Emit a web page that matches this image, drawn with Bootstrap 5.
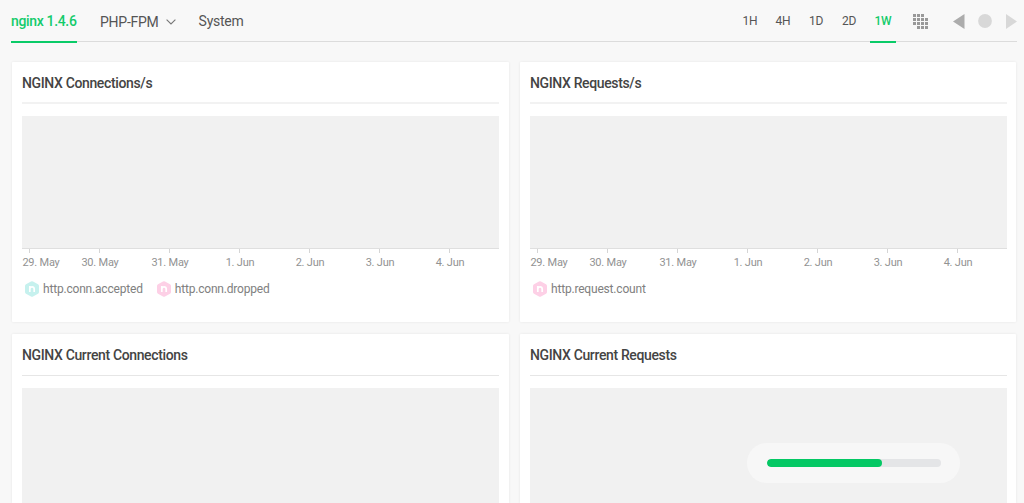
<!DOCTYPE html>
<html lang="en">
<head>
<meta charset="utf-8">
<meta name="viewport" content="width=device-width, initial-scale=1">
<title>NGINX monitoring</title>
<link href="https://cdn.jsdelivr.net/npm/bootstrap@5.3.0/dist/css/bootstrap.min.css" rel="stylesheet">
<style>
body{font-family:Roboto,sans-serif;background:#f8f8f8;color:#444;height:503px;overflow:hidden}
.topbar{height:42px;margin:0 7px 0 11px;border-bottom:1px solid #dcdcdc}
.topbar .nav-link{padding:0;height:43px;line-height:42px;font-size:14px;color:#555;white-space:nowrap;letter-spacing:-.25px}
.topbar .nav-link.active{color:#14cb6b;font-weight:500;border-bottom:2px solid #0acb68}
.main-tabs{gap:23px}
.main-tabs .nav-link.active{width:66px;letter-spacing:-.34px}
.topbar .ranges{gap:7px}
.topbar .ranges .nav-link{font-size:12px;width:26px;text-align:center;padding-right:2px}
.topbar .ranges .nav-link.active{padding-right:0}
.tools{height:42px;padding-left:17px}
.panels{display:grid;grid-template-columns:497px 496px;grid-template-rows:260px 170px;column-gap:11px;row-gap:12px;padding:20px 0 0 12px;height:461px;overflow:hidden}
.panel{border:0;border-radius:1px;padding:0 9px 0 10px;box-shadow:0 0 3px rgba(0,0,0,.08);background:#fff}
.panel h2{font-size:14px;font-weight:500;line-height:20px;color:#444;letter-spacing:-.36px;margin:0;width:477px;height:42px;padding-top:11px;border-bottom:2px solid #f2f2f2}
.panel.cut h2{border-bottom:1px solid #e6e6e6}
.plot{height:133px;width:477px;flex:none;margin-top:12px;background:#f1f1f1;border-bottom:1px solid #dfdfdf}
.panel.cut .plot{height:116px;border:0}
.axis{margin-left:-27px;width:490px}
.axis span{width:70px;flex:none;text-align:center;font-size:11px;line-height:16px;letter-spacing:-.22px;color:#929292;white-space:nowrap}
.axis span::before{content:"";display:block;width:1px;height:4px;margin:0 0 2px 34px;background:#d5d5d5}
.axis b{display:block;font-weight:400}
.axis span:first-child b{padding-left:22px}
.legend{padding:9px 0 0 3px;gap:14px;font-size:12px;line-height:18px;letter-spacing:-.19px;color:#808080}
.legend svg{margin-right:4px;margin-top:-1px}
.loader{position:absolute;left:747px;top:443px;width:213px;height:40px;border-radius:20px;background:#f7f7f7;padding:16px 19px 16px 20px}
.loader .progress{height:8px;border-radius:4px;background:#e4e5e7}
.loader .progress-bar{background:#04c864;border-radius:4px}
</style>
<script src="https://cdn.jsdelivr.net/npm/bootstrap@5.3.0/dist/js/bootstrap.bundle.min.js"></script>
</head>
<body>
<svg width="0" height="0" class="position-absolute">
  <symbol id="hex" viewBox="0 0 14 16">
    <path d="M6 .5Q7 0 8 .5l5 2.800q1 .500 1 1.600v6.200q0 1.100-1 1.600l-5 2.800q-1 .500-2 0l-5-2.800q-1-.500-1-1.600V4.900q0-1.100 1-1.600z" fill="currentColor"/>
    <path d="M4.800 11V5M4.800 7.600Q5.400 5.900 7 5.900 9.200 5.900 9.200 8.100V11" fill="none" stroke="#fff" stroke-width="1.700"/>
  </symbol>
</svg>
<header class="topbar d-flex justify-content-between">
  <nav class="nav main-tabs flex-nowrap">
    <a class="nav-link active" href="#">nginx 1.4.6</a>
    <a class="nav-link d-flex align-items-center" href="#">PHP-FPM<svg width="10" height="6" viewBox="0 0 10 6" style="margin-left:7px"><path d="M.6.6 5 5 9.400.6" fill="none" stroke="#777" stroke-width="1.100"/></svg></a>
    <a class="nav-link" href="#">System</a>
  </nav>
  <div class="d-flex">
    <nav class="nav ranges flex-nowrap">
      <a class="nav-link" href="#">1H</a>
      <a class="nav-link" href="#">4H</a>
      <a class="nav-link" href="#">1D</a>
      <a class="nav-link" href="#">2D</a>
      <a class="nav-link active" href="#">1W</a>
    </nav>
    <div class="tools d-flex align-items-center">
      <svg width="15" height="15" viewBox="0 0 15 15" fill="#999"><path d="M0 0h3v3H0zM4 0h3v3H4zM8 0h3v3H8zM0 4h3v3H0zM4 4h3v3H4zM8 4h3v3H8zM12 4h3v3h-3zM0 8h3v3H0zM4 8h3v3H4zM8 8h3v3H8zM12 8h3v3h-3zM4 12h3v3H4zM8 12h3v3H8zM12 12h3v3h-3z"/></svg>
      <svg width="12" height="15" viewBox="0 0 12 15" style="margin-left:25px"><path d="M0 7.500 11.500 0V15z" fill="#acacac"/></svg>
      <svg width="14" height="14" viewBox="0 0 14 14" style="margin-left:13px"><circle cx="7" cy="7" r="6.900" fill="#d8d8d8"/></svg>
      <svg width="11" height="15" viewBox="0 0 11 15" style="margin-left:14px"><path d="M0 0 11 7.500 0 15z" fill="#d8d8d8"/></svg>
    </div>
  </div>
</header>
<main class="panels">
  <section class="card panel">
    <h2>NGINX Connections/s</h2>
    <div class="plot"></div>
    <div class="axis d-flex"><span><b>29. May</b></span><span><b>30. May</b></span><span><b>31. May</b></span><span><b>1. Jun</b></span><span><b>2. Jun</b></span><span><b>3. Jun</b></span><span><b>4. Jun</b></span></div>
    <div class="legend d-flex">
      <div class="d-flex align-items-center"><svg width="14" height="16" color="#c6f1ee"><use href="#hex"/></svg>http.conn.accepted</div>
      <div class="d-flex align-items-center"><svg width="14" height="16" color="#fdd0e6"><use href="#hex"/></svg>http.conn.dropped</div>
    </div>
  </section>
  <section class="card panel">
    <h2>NGINX Requests/s</h2>
    <div class="plot"></div>
    <div class="axis d-flex"><span><b>29. May</b></span><span><b>30. May</b></span><span><b>31. May</b></span><span><b>1. Jun</b></span><span><b>2. Jun</b></span><span><b>3. Jun</b></span><span><b>4. Jun</b></span></div>
    <div class="legend d-flex">
      <div class="d-flex align-items-center"><svg width="14" height="16" color="#fdd0e6"><use href="#hex"/></svg>http.request.count</div>
    </div>
  </section>
  <section class="card panel cut">
    <h2>NGINX Current Connections</h2>
    <div class="plot"></div>
  </section>
  <section class="card panel cut">
    <h2>NGINX Current Requests</h2>
    <div class="plot"></div>
  </section>
</main>
<div class="loader">
  <div class="progress"><div class="progress-bar" style="width:66%"></div></div>
</div>
</body>
</html>
